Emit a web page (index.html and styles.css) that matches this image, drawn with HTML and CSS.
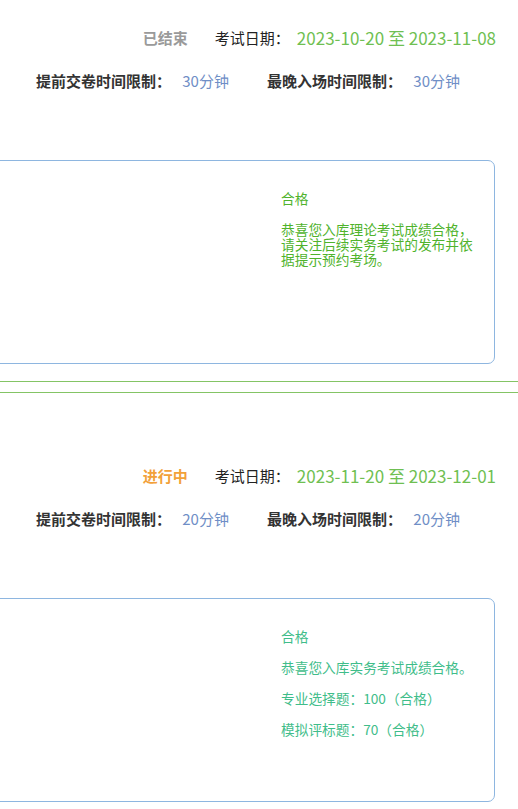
FILE: index.html
```html
<!DOCTYPE html>
<html lang="zh-CN">
<head>
    <meta charset="UTF-8">
    <meta name="viewport" content="width=device-width, initial-scale=1.0">
    <title>我的考试</title>
    <link rel="stylesheet" href="styles.css">
</head>
<body>
    <div class="exam-list">
        <div class="exam-item">
            <div class="exam-head">
                <span class="status status-done">已结束</span>
                <span class="label">考试日期：</span>
                <span class="date">2023-10-20 至 2023-11-08</span>
            </div>
            <div class="exam-limits">
                <div class="limit">
                    <span class="limit-label">提前交卷时间限制：</span>
                    <span class="limit-value">30分钟</span>
                </div>
                <div class="limit">
                    <span class="limit-label">最晚入场时间限制：</span>
                    <span class="limit-value">30分钟</span>
                </div>
            </div>
            <div class="result-card">
                <div class="result result-theory">
                    <p>合格</p>
                    <p>恭喜您入库理论考试成绩合格，请关注后续实务考试的发布并依据提示预约考场。</p>
                </div>
            </div>
        </div>

        <div class="exam-item">
            <div class="exam-head">
                <span class="status status-running">进行中</span>
                <span class="label">考试日期：</span>
                <span class="date">2023-11-20 至 2023-12-01</span>
            </div>
            <div class="exam-limits">
                <div class="limit">
                    <span class="limit-label">提前交卷时间限制：</span>
                    <span class="limit-value">20分钟</span>
                </div>
                <div class="limit">
                    <span class="limit-label">最晚入场时间限制：</span>
                    <span class="limit-value">20分钟</span>
                </div>
            </div>
            <div class="result-card">
                <div class="result result-practice">
                    <p>合格</p>
                    <p>恭喜您入库实务考试成绩合格。</p>
                    <p>专业选择题：100（合格）</p>
                    <p>模拟评标题：70（合格）</p>
                </div>
            </div>
        </div>
    </div>
</body>
</html>
```

FILE: styles.css
```css
body {
    margin: 0;
    font-family: "Noto Sans CJK SC", "Noto Sans", sans-serif;
    background-color: #ffffff;
    color: #333333;
    overflow: hidden;
}
.exam-list {
    margin-top: -46px;
}
.exam-item {
    border-top: 1px solid #84c465;
    border-bottom: 1px solid #84c465;
    margin-bottom: 10px;
    padding: 69px 0 17px 0;
}
.exam-head {
    display: flex;
    justify-content: flex-end;
    align-items: center;
    height: 26px;
    padding-right: 22px;
    font-size: 15px;
}
.status {
    font-weight: bold;
    margin-right: 27px;
}
.status-done {
    color: #9a9a9a;
}
.status-running {
    color: #f2a13a;
}
.label {
    color: #222222;
}
.date {
    margin-left: 7px;
    font-size: 17px;
    color: #6fbf52;
}
.exam-limits {
    display: flex;
    justify-content: flex-end;
    align-items: center;
    gap: 38px;
    height: 24px;
    margin-top: 18px;
    padding-right: 58px;
    font-size: 15px;
}
.limit-label {
    font-weight: bold;
    color: #333333;
}
.limit-value {
    margin-left: 8px;
    color: #6f8ec6;
}
.result-card {
    display: flex;
    justify-content: flex-end;
    box-sizing: border-box;
    height: 204px;
    margin: 68px 23px 0 -20px;
    padding: 30px 13px 0 0;
    border: 1px solid #8eb6e0;
    border-radius: 7px;
}
.result {
    width: 200px;
    font-size: 13.7px;
    line-height: 15px;
}
.result p {
    margin: 0 0 16px 0;
}
.result-theory {
    color: #4fb32c;
}
.result-practice {
    color: #3fbd8a;
}
```
